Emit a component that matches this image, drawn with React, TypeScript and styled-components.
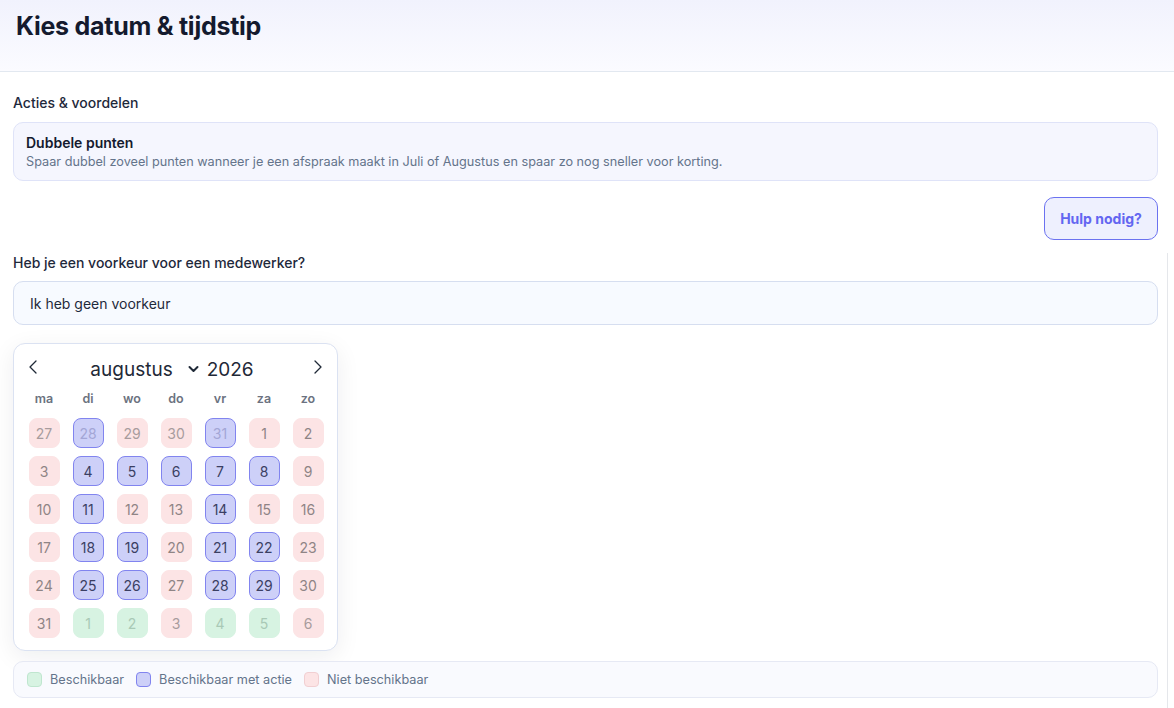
import React from 'react';
import styled, { createGlobalStyle } from 'styled-components';

type DayKind = 'free' | 'promo' | 'closed';

interface Day {
  n: number;
  kind: DayKind;
  outside?: boolean;
}

const GlobalStyle = createGlobalStyle`
  body {
    margin: 0;
    background: #ffffff;
    font-family: Inter, "Noto Sans", Arial, sans-serif;
    color: #1e293b;
  }
`;

const Header = styled.header`
  height: 71px;
  padding: 0 16px;
  display: flex;
  align-items: flex-start;
  background: linear-gradient(180deg, #f1f2fd 0%, #fbfbff 100%);
  border-bottom: 1px solid #e2e8f0;
`;

const Title = styled.h1`
  margin: 11px 0 0;
  font-size: 25px;
  font-weight: 700;
  letter-spacing: -0.25px;
  color: #141a2e;
`;

const Main = styled.main`
  padding: 0 16px 0 13px;
`;

const SectionLabel = styled.div<{ $top: number }>`
  margin-top: ${p => p.$top}px;
  font-size: 14px;
  font-weight: 500;
  color: #1e293b;
  line-height: 20px;
`;

const PromoCard = styled.div`
  margin-top: 9px;
  padding: 10px 12px 9px;
  background: #f5f6fe;
  border: 1px solid #dfe3f8;
  border-radius: 10px;
`;

const PromoTitle = styled.div`
  font-size: 14px;
  font-weight: 600;
  color: #141a2e;
  line-height: 20px;
`;

const PromoText = styled.div`
  font-size: 12.7px;
  color: #64748b;
  line-height: 18px;
`;

const ButtonRow = styled.div`
  display: flex;
  justify-content: flex-end;
  margin-top: 16px;
`;

const HelpButton = styled.button`
  height: 43px;
  width: 114px;
  border: 1.5px solid #6b72f0;
  border-radius: 10px;
  background: #eef0fe;
  color: #6366f1;
  font-family: inherit;
  font-size: 14px;
  font-weight: 700;
`;

const Lower = styled.section`
  margin-right: -10px;
  padding-right: 9px;
  border-right: 1px solid #e5e7eb;
  margin-top: 13px;
  padding-bottom: 10px;
`;

const SelectBox = styled.div`
  margin-top: 8px;
  height: 42px;
  display: flex;
  align-items: center;
  padding: 0 16px;
  background: #f7faff;
  border: 1px solid #d6def0;
  border-radius: 10px;
  font-size: 14px;
  color: #1e293b;
`;

const Calendar = styled.div`
  margin-top: 18px;
  width: 307px;
  padding: 10px 8px 12px 8px;
  background: #ffffff;
  border: 1px solid #dbe2f2;
  border-radius: 12px;
  box-shadow: 0 6px 24px rgba(15, 23, 42, 0.07);
`;

const CalHead = styled.div`
  display: flex;
  align-items: center;
  justify-content: space-between;
  height: 26px;
  padding: 0 4px 0 4px;
`;

const Arrow = styled.button`
  border: none;
  background: none;
  padding: 0;
  width: 14px;
  height: 20px;
  display: flex;
  align-items: center;
  justify-content: center;
  color: #1f2937;
`;

const MonthPick = styled.div`
  display: flex;
  align-items: center;
  gap: 8px;
  padding-right: 7px;
  font-size: 19px;
  color: #1f2937;
  margin-top: 4px;
`;

const MonthName = styled.span`
  display: flex;
  align-items: center;
  gap: 15px;
`;

const Grid = styled.div`
  display: grid;
  grid-template-columns: repeat(7, 44px);
  row-gap: 8px;
  justify-items: center;
  margin-top: 11px;
`;

const WeekDay = styled.div`
  font-size: 12.5px;
  font-weight: 600;
  color: #6b7280;
  height: 16px;
  line-height: 16px;
  margin-bottom: 3px;
`;

const palette: Record<DayKind, { bg: string; border: string; color: string; faded: string }> = {
  free: { bg: '#d7f3e2', border: '#d7f3e2', color: '#8fb8a2', faded: '#a9c9b6' },
  promo: { bg: '#cdd0f8', border: '#8184ef', color: '#3b3f63', faded: '#a3a6d6' },
  closed: { bg: '#fce4e5', border: '#fce4e5', color: '#8f8485', faded: '#a89c9d' },
};

const Cell = styled.div<{ $kind: DayKind; $outside?: boolean }>`
  width: 31px;
  height: 30px;
  box-sizing: border-box;
  border-radius: 8px;
  display: flex;
  align-items: center;
  justify-content: center;
  font-size: 14px;
  background: ${p => palette[p.$kind].bg};
  border: 1px solid ${p => palette[p.$kind].border};
  color: ${p => (p.$outside ? palette[p.$kind].faded : palette[p.$kind].color)};
`;

const Legend = styled.div`
  margin-top: 10px;
  height: 35px;
  display: flex;
  align-items: center;
  gap: 12px;
  padding: 0 13px;
  background: #f9fafe;
  border: 1px solid #e6e9f4;
  border-radius: 10px;
`;

const LegendItem = styled.div`
  display: flex;
  align-items: center;
  gap: 8px;
  font-size: 12.7px;
  color: #64748b;
`;

const Swatch = styled.span<{ $kind: DayKind }>`
  width: 15px;
  height: 15px;
  box-sizing: border-box;
  border-radius: 4px;
  background: ${p => palette[p.$kind].bg};
  border: 1px solid ${p => (p.$kind === 'promo' ? '#8184ef' : p.$kind === 'free' ? '#bfe6cf' : '#f1cfd2')};
`;

const weekdays = ['ma', 'di', 'wo', 'do', 'vr', 'za', 'zo'];

const promoDays = [4, 5, 6, 7, 8, 11, 14, 18, 19, 21, 22, 25, 26, 28, 29];

const buildDays = (): Day[] => {
  const days: Day[] = [
    { n: 27, kind: 'closed', outside: true },
    { n: 28, kind: 'promo', outside: true },
    { n: 29, kind: 'closed', outside: true },
    { n: 30, kind: 'closed', outside: true },
    { n: 31, kind: 'promo', outside: true },
  ];
  for (let d = 1; d <= 31; d++) {
    days.push({ n: d, kind: promoDays.includes(d) ? 'promo' : 'closed' });
  }
  const tail: DayKind[] = ['free', 'free', 'closed', 'free', 'free', 'closed'];
  tail.forEach((k, i) => days.push({ n: i + 1, kind: k, outside: true }));
  return days;
};

const ChevronLeft = () => (
  <svg width="10" height="16" viewBox="0 0 10 16" fill="none" stroke="currentColor" strokeWidth="1.3" strokeLinecap="round" strokeLinejoin="round">
    <path d="M8 2 L2 8 L8 14" />
  </svg>
);

const ChevronRight = () => (
  <svg width="10" height="16" viewBox="0 0 10 16" fill="none" stroke="currentColor" strokeWidth="1.3" strokeLinecap="round" strokeLinejoin="round">
    <path d="M2 2 L8 8 L2 14" />
  </svg>
);

const CaretDown = () => (
  <svg width="11" height="8" viewBox="0 0 11 8" fill="none" stroke="currentColor" strokeWidth="2" strokeLinecap="round" strokeLinejoin="round">
    <path d="M1.5 2 L5.5 6 L9.5 2" />
  </svg>
);

export default function App() {
  const days = buildDays();
  return (
    <>
      <GlobalStyle />
      <Header>
        <Title>Kies datum &amp; tijdstip</Title>
      </Header>
      <Main>
        <SectionLabel $top={21}>Acties &amp; voordelen</SectionLabel>
        <PromoCard>
          <PromoTitle>Dubbele punten</PromoTitle>
          <PromoText>
            Spaar dubbel zoveel punten wanneer je een afspraak maakt in Juli of Augustus en spaar zo nog sneller voor korting.
          </PromoText>
        </PromoCard>
        <ButtonRow>
          <HelpButton>Hulp nodig?</HelpButton>
        </ButtonRow>
        <Lower>
          <SectionLabel $top={0}>Heb je een voorkeur voor een medewerker?</SectionLabel>
          <SelectBox>Ik heb geen voorkeur</SelectBox>
          <Calendar>
            <CalHead>
              <Arrow aria-label="Vorige maand">
                <ChevronLeft />
              </Arrow>
              <MonthPick>
                <MonthName>
                  augustus <CaretDown />
                </MonthName>
                <span>2026</span>
              </MonthPick>
              <Arrow aria-label="Volgende maand">
                <ChevronRight />
              </Arrow>
            </CalHead>
            <Grid>
              {weekdays.map(w => (
                <WeekDay key={w}>{w}</WeekDay>
              ))}
              {days.map((d, i) => (
                <Cell key={i} $kind={d.kind} $outside={d.outside}>
                  {d.n}
                </Cell>
              ))}
            </Grid>
          </Calendar>
          <Legend>
            <LegendItem>
              <Swatch $kind="free" />
              Beschikbaar
            </LegendItem>
            <LegendItem>
              <Swatch $kind="promo" />
              Beschikbaar met actie
            </LegendItem>
            <LegendItem>
              <Swatch $kind="closed" />
              Niet beschikbaar
            </LegendItem>
          </Legend>
        </Lower>
      </Main>
    </>
  );
}
